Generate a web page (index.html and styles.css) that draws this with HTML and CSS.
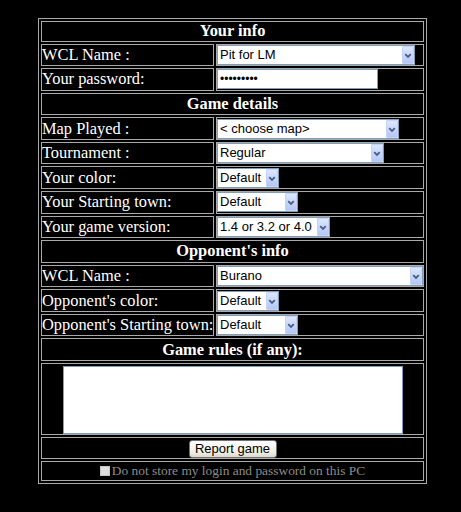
FILE: index.html
```html
<!DOCTYPE html>
<html>
<head>
<meta charset="utf-8">
<title>Report game</title>
<link rel="stylesheet" href="styles.css">
</head>
<body>
<table class="report">
  <colgroup><col class="c1"><col class="c2"></colgroup>
  <tr class="r first"><th colspan="2">Your info</th></tr>
  <tr class="r">
    <td class="lbl">WCL Name :</td>
    <td class="ctl"><div class="select w-name"><span class="val">Pit for LM</span><span class="arrow"><svg width="12" height="18" viewBox="0 0 12 18"><path d="M3.2 7.2 L6 10 L8.8 7.2" fill="none" stroke="#4a5d86" stroke-width="1.8"/></svg></span></div></td>
  </tr>
  <tr class="r">
    <td class="lbl">Your password:</td>
    <td class="ctl"><input class="pw" type="password" value="123456789"></td>
  </tr>
  <tr class="r"><th colspan="2">Game details</th></tr>
  <tr class="r">
    <td class="lbl">Map Played :</td>
    <td class="ctl"><div class="select w-map"><span class="val">&lt; choose map&gt;</span><span class="arrow"><svg width="12" height="18" viewBox="0 0 12 18"><path d="M3.2 7.2 L6 10 L8.8 7.2" fill="none" stroke="#4a5d86" stroke-width="1.8"/></svg></span></div></td>
  </tr>
  <tr class="r">
    <td class="lbl">Tournament :</td>
    <td class="ctl"><div class="select w-tour"><span class="val">Regular</span><span class="arrow"><svg width="12" height="18" viewBox="0 0 12 18"><path d="M3.2 7.2 L6 10 L8.8 7.2" fill="none" stroke="#4a5d86" stroke-width="1.8"/></svg></span></div></td>
  </tr>
  <tr class="r">
    <td class="lbl">Your color:</td>
    <td class="ctl"><div class="select w-color"><span class="val">Default</span><span class="arrow"><svg width="12" height="18" viewBox="0 0 12 18"><path d="M3.2 7.2 L6 10 L8.8 7.2" fill="none" stroke="#4a5d86" stroke-width="1.8"/></svg></span></div></td>
  </tr>
  <tr class="r">
    <td class="lbl">Your Starting town:</td>
    <td class="ctl"><div class="select w-town"><span class="val">Default</span><span class="arrow"><svg width="12" height="18" viewBox="0 0 12 18"><path d="M3.2 7.2 L6 10 L8.8 7.2" fill="none" stroke="#4a5d86" stroke-width="1.8"/></svg></span></div></td>
  </tr>
  <tr class="r">
    <td class="lbl">Your game version:</td>
    <td class="ctl"><div class="select w-ver"><span class="val">1.4 or 3.2 or 4.0</span><span class="arrow"><svg width="12" height="18" viewBox="0 0 12 18"><path d="M3.2 7.2 L6 10 L8.8 7.2" fill="none" stroke="#4a5d86" stroke-width="1.8"/></svg></span></div></td>
  </tr>
  <tr class="r"><th colspan="2">Opponent's info</th></tr>
  <tr class="r">
    <td class="lbl">WCL Name :</td>
    <td class="ctl"><div class="select w-opp"><span class="val">Burano</span><span class="arrow"><svg width="12" height="18" viewBox="0 0 12 18"><path d="M3.2 7.2 L6 10 L8.8 7.2" fill="none" stroke="#4a5d86" stroke-width="1.8"/></svg></span></div></td>
  </tr>
  <tr class="r">
    <td class="lbl">Opponent's color:</td>
    <td class="ctl"><div class="select w-color"><span class="val">Default</span><span class="arrow"><svg width="12" height="18" viewBox="0 0 12 18"><path d="M3.2 7.2 L6 10 L8.8 7.2" fill="none" stroke="#4a5d86" stroke-width="1.8"/></svg></span></div></td>
  </tr>
  <tr class="r">
    <td class="lbl">Opponent's Starting town:</td>
    <td class="ctl"><div class="select w-town"><span class="val">Default</span><span class="arrow"><svg width="12" height="18" viewBox="0 0 12 18"><path d="M3.2 7.2 L6 10 L8.8 7.2" fill="none" stroke="#4a5d86" stroke-width="1.8"/></svg></span></div></td>
  </tr>
  <tr class="r"><th colspan="2">Game rules (if any):</th></tr>
  <tr><td colspan="2" class="area"><textarea class="rules"></textarea></td></tr>
  <tr class="r-btn"><td colspan="2" class="center"><button class="btn" type="button">Report game</button></td></tr>
  <tr class="r-cb"><td colspan="2" class="center note"><input class="cb" type="checkbox" disabled><span>Do not store my login and password on this PC</span></td></tr>
</table>
</body>
</html>
```

FILE: styles.css
```css
html, body {
  margin: 0;
  background: #000;
}

body {
  padding: 18px 0 0 38px;
}

.report {
  width: 389px;
  border-collapse: separate;
  border-spacing: 2px;
  border: 1px solid #a9a9a9;
  color: #fff;
  font: 16.4px/18px "Liberation Serif", "Times New Roman", serif;
  table-layout: fixed;
}

.report col.c1 {
  width: 173px;
}

.report th,
.report td {
  border: 1px solid #a9a9a9;
  padding: 0;
  box-sizing: border-box;
  vertical-align: middle;
}

.report th {
  font-weight: bold;
  text-align: center;
}

.report tr.r {
  height: 22.58px;
}

.report tr.r.first {
  height: 20.5px;
}

.report td.lbl {
  white-space: nowrap;
  text-align: left;
}

.report td.ctl {
  padding-left: 0;
}

.select {
  display: flex;
  height: 20px;
  box-sizing: border-box;
  border: 1px solid #7f9db9;
  background: #fff;
  color: #000;
  font: 13px/18px "Liberation Sans", Arial, sans-serif;
}

.select .val {
  flex: 1;
  padding-left: 2px;
  white-space: nowrap;
  overflow: hidden;
}

.select .arrow {
  width: 12px;
  height: 18px;
  box-sizing: border-box;
  border: 1px solid #c3d2f6;
  border-radius: 1px;
  background: linear-gradient(#dce6fd, #b4c7f5);
  display: flex;
  justify-content: center;
}

.select .arrow svg {
  display: block;
  flex: none;
}

.w-name { width: 198px; }
.w-map { width: 182px; }
.w-tour { width: 167px; }
.w-color { width: 62px; }
.w-town { width: 81px; }
.w-ver { width: 113px; }
.w-opp { width: 206px; }

.pw {
  display: block;
  width: 161px;
  height: 20px;
  box-sizing: border-box;
  margin: 0;
  border: 1px solid #7f9db9;
  padding: 0 2px;
  background: #fff;
  color: #000;
  font: 12px/18px "Liberation Sans", Arial, sans-serif;
  outline: none;
}

.area {
  padding: 0;
}

.rules {
  display: block;
  width: 340px;
  height: 68px;
  box-sizing: border-box;
  margin: 2px auto 0;
  border: 1px solid #7f9db9;
  background: #fff;
  resize: none;
  padding: 0;
}

.center {
  text-align: center;
}

.report tr.r-btn {
  height: 22px;
}

.btn {
  width: 88px;
  height: 18px;
  box-sizing: border-box;
  margin: 0;
  padding: 0;
  border: 1px solid #707070;
  border-radius: 3px;
  background: linear-gradient(#ffffff, #f0efe6 70%, #dcd9cc);
  color: #000;
  font: 13px/16px "Liberation Sans", Arial, sans-serif;
  vertical-align: middle;
}

.report tr.r-cb {
  height: 20px;
}

.note {
  color: #8c8c8c;
  font: 13.4px/16px "Liberation Serif", "Times New Roman", serif;
}

.cb {
  appearance: none;
  -webkit-appearance: none;
  width: 10px;
  height: 10px;
  box-sizing: border-box;
  margin: 0 2px 0 0;
  border: 1px solid #c4c4c4;
  background: #dedede;
  vertical-align: -1px;
}
```
